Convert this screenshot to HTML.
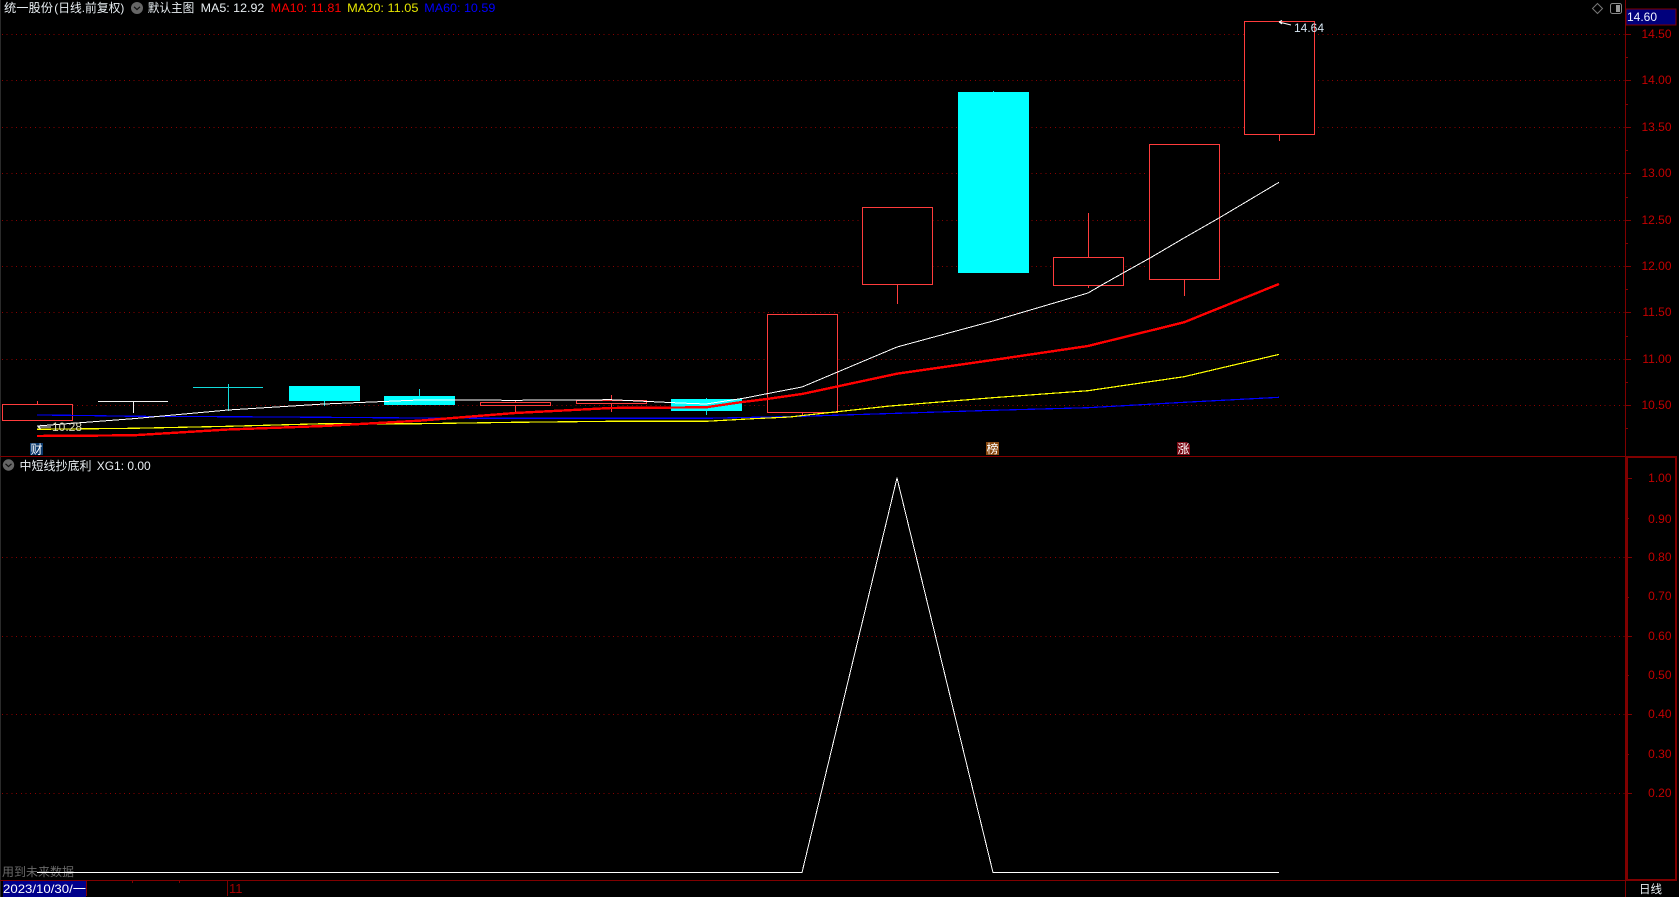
<!DOCTYPE html>
<html lang="zh-CN">
<head>
<meta charset="utf-8">
<title>统一股份 日线</title>
<style>
html,body{margin:0;padding:0;background:#000;width:1679px;height:897px;overflow:hidden}
svg{display:block;position:absolute;left:0;top:0}
text{font-family:"Liberation Sans","Noto Sans CJK SC",sans-serif;font-size:12px}
.lab{fill:#c40000;text-anchor:end}
.w{fill:#e8eef2}
</style>
</head>
<body>
<svg width="1679" height="897" viewBox="0 0 1679 897" xmlns="http://www.w3.org/2000/svg">
<rect width="1679" height="897" fill="#000"/>
<rect x="0" y="0" width="1" height="897" fill="#2a2a2a"/>

<!-- grid -->
<g stroke="#8a0000" stroke-width="1" stroke-dasharray="1 3.7" shape-rendering="crispEdges" fill="none">
<path d="M2 34.5H1625M2 80.5H1625M2 127.5H1625M2 173.5H1625M2 220.5H1625M2 266.5H1625M2 312.5H1625M2 359.5H1625M2 405.5H1625"/>
<path d="M2 557.5H1625M2 636.5H1625M2 714.5H1625M2 793.5H1625"/>
</g>

<!-- axes -->
<g shape-rendering="crispEdges">
<rect x="1625" y="0" width="1" height="456" fill="#800000"/>
<rect x="1625" y="457" width="3" height="424" fill="#800000"/>
<rect x="1625" y="881" width="1" height="16" fill="#800000"/>
<rect x="0" y="456" width="1677" height="1" fill="#800000"/>
<rect x="1625" y="456" width="52" height="2" fill="#800000"/>
<rect x="0" y="880" width="1677" height="1" fill="#800000"/>
<rect x="1625" y="879" width="52" height="2" fill="#800000"/>
<rect x="1675" y="456" width="2" height="425" fill="#800000"/>
<!-- ticks main -->
<path stroke="#800000" stroke-width="1" fill="none" d="M1626 34.5h5M1626 80.5h5M1626 127.5h5M1626 173.5h5M1626 220.5h5M1626 266.5h5M1626 312.5h5M1626 359.5h5M1626 405.5h5M1626 57.5h2M1626 104.5h2M1626 150.5h2M1626 197.5h2M1626 243.5h2M1626 289.5h2M1626 336.5h2M1626 382.5h2M1626 428.5h2"/>
<!-- ticks sub -->
<path stroke="#800000" stroke-width="1" fill="none" d="M1627 478.5h5M1627 557.5h5M1627 636.5h5M1627 714.5h5M1627 793.5h5M1627 518.5h2M1627 597.5h2M1627 675.5h2M1627 754.5h2"/>
<!-- bottom ticks -->
<path stroke="#800000" stroke-width="1" fill="none" d="M132.5 881v2M179.5 881v2M227.5 881v15M86.5 881v15"/>
</g>

<!-- candles -->
<g shape-rendering="crispEdges" stroke-width="1" fill="none">
<g stroke="#ff3c3c">
<path d="M37.5 401V404M515.5 401V413M611.5 395V412M802.5 412V416M897.5 284V304M1088.5 213V257M1088.5 285V288M1184.5 279V296M1279.5 134V141"/>
<rect x="2.5" y="404.5" width="70" height="16" fill="#000"/>
<rect x="480.5" y="402.5" width="70" height="3" fill="#000"/>
<rect x="576.5" y="400.5" width="70" height="3" fill="#000"/>
<rect x="767.5" y="314.5" width="70" height="98" fill="#000"/>
<rect x="862.5" y="207.5" width="70" height="77" fill="#000"/>
<rect x="1053.5" y="257.5" width="70" height="28" fill="#000"/>
<rect x="1149.5" y="144.5" width="70" height="135" fill="#000"/>
<rect x="1244.5" y="21.5" width="70" height="113" fill="#000"/>
</g>
<path stroke="#f0f0f0" d="M98 401.5H168M133.5 401V413"/>
<path stroke="#12dcdc" d="M193 387.5H263M228.5 384V411"/>
<path stroke="#12dcdc" d="M324.5 400V406M419.5 389V396M706.5 398V415M993.5 91V92"/>
<g fill="#00ffff" stroke="none">
<rect x="289" y="386" width="71" height="15"/>
<rect x="384" y="396" width="71" height="9"/>
<rect x="671" y="399" width="71" height="12"/>
<rect x="958" y="92" width="71" height="181"/>
</g>
</g>

<!-- moving averages -->
<g fill="none" shape-rendering="crispEdges" stroke-linejoin="round">
<polyline stroke="#0000ff" stroke-width="1.2" points="37,415 85,415.5 133,416.3 228,416.7 324,417.3 419,418 515,418.3 611,418.3 706,418.3 802,416.3 897,413.3 993,410.3 1088,407.7 1184,402.3 1279,397.3"/>
<polyline stroke="#ffff00" stroke-width="1.2" points="37,429.3 133,428.3 228,426.3 324,423.7 419,423.7 515,422.3 611,421.3 706,421.3 753,418.7 790,417 807,415 890,406 993,397.7 1088,390.7 1184,376.7 1279,354.4"/>
<polyline stroke="#ff0000" stroke-width="2.4" points="37,436 133,435.3 228,429.5 324,426 419,420.7 515,413 611,408 706,407.3 740,402.3 767,399 802,394 897,373.7 993,360 1088,346 1184,322.3 1279,284"/>
<polyline stroke="#ffffff" stroke-width="1" points="37,426 133,418.7 228,410 324,404 419,400 515,400.3 611,399.7 680,403 706,404 745,398 767,393.7 802,387 897,347 993,321 1088,293 1100,286 1123,273 1150,258 1184,238 1219,218 1279,182.3"/>
<!-- sub panel line -->
<polyline stroke="#ffffff" stroke-width="1" points="37,872.5 802,872.5 897,478 993,872.5 1279,872.5"/>
</g>

<!-- high / low markers -->
<path d="M1279 22 L1291 25 M1279 22 l3 -1.5 M1279 22 l3 2" stroke="#fff" stroke-width="1" fill="none"/>
<text x="1294" y="32" fill="#d6e6f2">14.64</text>
<path d="M51 427 L38 427 M38 427 l3 -2 M38 427 l3 2" stroke="#e8e8e8" stroke-width="1" fill="none"/>
<text x="52" y="431" fill="#d8d8b8">10.28</text>

<!-- header -->
<text x="4" y="12" class="w" textLength="49" lengthAdjust="spacingAndGlyphs">统一股份</text>
<text x="54.3" y="12" class="w" textLength="70" lengthAdjust="spacingAndGlyphs">(日线.前复权)</text>
<circle cx="137" cy="8" r="6" fill="#666"/>
<path d="M134 6.8l3 2.8 3-2.8" stroke="#111" stroke-width="1.2" fill="none"/>
<text x="147.7" y="12" class="w" textLength="46.6" lengthAdjust="spacingAndGlyphs">默认主图</text>
<text x="200.7" y="12" class="w" textLength="63.6" lengthAdjust="spacingAndGlyphs">MA5: 12.92</text>
<text x="270.7" y="12" fill="#ff0000" textLength="70.7" lengthAdjust="spacingAndGlyphs">MA10: 11.81</text>
<text x="347.1" y="12" fill="#e6e600" textLength="71.4" lengthAdjust="spacingAndGlyphs">MA20: 11.05</text>
<text x="424.3" y="12" fill="#0000ff" textLength="71" lengthAdjust="spacingAndGlyphs">MA60: 10.59</text>

<!-- top right icons -->
<path d="M1597.5 3.5l5 5-5 5-5-5z" fill="none" stroke="#777" stroke-width="1"/>
<rect x="1610.5" y="3.5" width="11" height="10" rx="2" fill="none" stroke="#888" stroke-width="1"/>
<rect x="1616" y="5" width="4" height="7" fill="#999"/>

<!-- price axis labels -->
<rect x="1626" y="9" width="50" height="16" fill="#00007c" stroke="#800000" stroke-width="1" shape-rendering="crispEdges"/>
<text x="1627" y="21" fill="#f0f4ff">14.60</text>
<g>
<text class="lab" x="1671.5" y="38">14.50</text>
<text class="lab" x="1671.5" y="84">14.00</text>
<text class="lab" x="1671.5" y="131">13.50</text>
<text class="lab" x="1671.5" y="177">13.00</text>
<text class="lab" x="1671.5" y="224">12.50</text>
<text class="lab" x="1671.5" y="270">12.00</text>
<text class="lab" x="1671.5" y="316">11.50</text>
<text class="lab" x="1671.5" y="363">11.00</text>
<text class="lab" x="1671.5" y="409">10.50</text>
<text class="lab" x="1671.5" y="482">1.00</text>
<text class="lab" x="1671.5" y="523">0.90</text>
<text class="lab" x="1671.5" y="561">0.80</text>
<text class="lab" x="1671.5" y="600">0.70</text>
<text class="lab" x="1671.5" y="640">0.60</text>
<text class="lab" x="1671.5" y="679">0.50</text>
<text class="lab" x="1671.5" y="718">0.40</text>
<text class="lab" x="1671.5" y="758">0.30</text>
<text class="lab" x="1671.5" y="797">0.20</text>
</g>

<!-- badges -->
<rect x="30" y="443" width="13" height="12" fill="#0c3a6c"/>
<text x="30.5" y="453.5" fill="#fff">财</text>
<rect x="986" y="442" width="13" height="13" fill="#8a4a10"/>
<text x="986.5" y="453" fill="#fff">榜</text>
<path d="M1177 442h10l3 3v10h-13z" fill="#7a0a14"/>
<text x="1177.5" y="453" fill="#fff">涨</text>

<!-- sub panel title -->
<circle cx="8.5" cy="465" r="5.7" fill="#666"/>
<path d="M5.5 463.8l3 2.8 3-2.8" stroke="#111" stroke-width="1.2" fill="none"/>
<text x="19.5" y="470" class="w">中短线抄底利</text>
<text x="96.7" y="470" class="w">XG1: 0.00</text>

<!-- bottom -->
<text x="2" y="876" fill="#6a6a6a">用到未来数据</text>
<rect x="37" y="872" width="40" height="1" fill="#fff"/>
<rect x="3" y="881" width="83" height="16" fill="#00008b"/>
<text x="3" y="893" fill="#fff" textLength="83" lengthAdjust="spacingAndGlyphs">2023/10/30/一</text>
<text x="229" y="893" fill="#a00000" style="font-size:13px">11</text>
<text x="1639" y="893" class="w" style="font-size:11.5px">日线</text>
</svg>
</body>
</html>
